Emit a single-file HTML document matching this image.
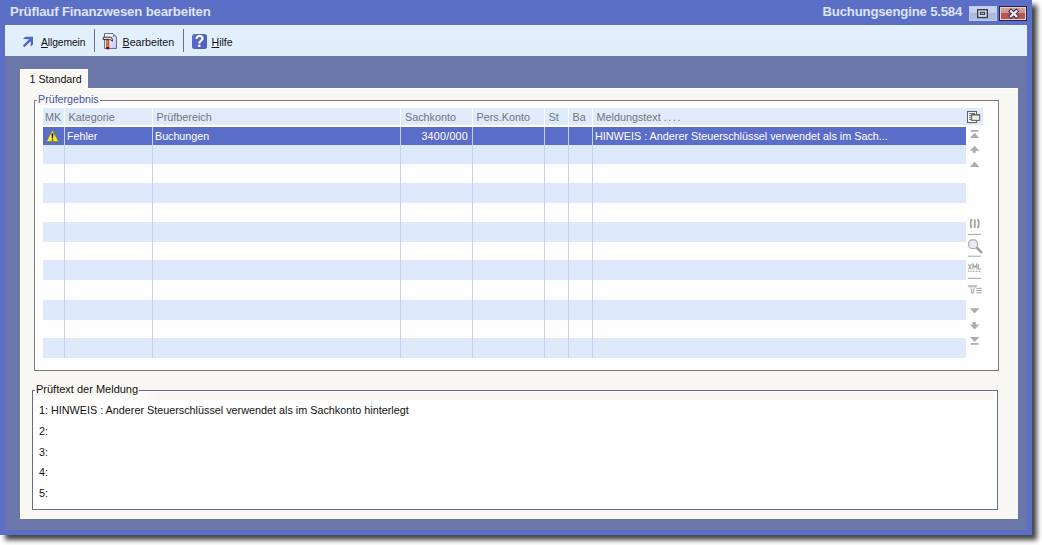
<!DOCTYPE html>
<html><head><meta charset="utf-8">
<style>
*{margin:0;padding:0;box-sizing:border-box}
html,body{width:1042px;height:545px;overflow:hidden;background:#fff;position:relative;font-family:"Liberation Sans",sans-serif}
.a{position:absolute}
.t{position:absolute;white-space:nowrap;line-height:1}
#shr{left:1032px;top:8px;width:9px;height:534px;background:linear-gradient(to right,#404040,#5a5a5a 30%,#a0a0a0 70%,#fff)}
#shb{left:6px;top:535px;width:1035px;height:8px;background:linear-gradient(to bottom,#404040,#5a5a5a 30%,#a0a0a0 70%,#fff)}
#win{left:0;top:0;width:1032px;height:535px;background:#5c6fc7;box-shadow:5px 5px 5px rgba(35,35,35,0.85)}
#tool{left:5px;top:25px;width:1022px;height:31px;background:linear-gradient(#eaf5ff 0,#e3f0fd 2px,#e0eefc 100%)}
#cont{left:5px;top:56px;width:1022px;height:474px;background:#6b77a8}
#tab{left:20px;top:68.5px;width:67.5px;height:20.5px;background:#faf8f4;border-top:1px solid #fff;border-left:1px solid #fff;border-right:1px solid #fdfcfa}
#panel{left:20px;top:88px;width:998px;height:431px;background:#f9f7f3;border-top:1px solid #fff;border-left:1px solid #fff}
.gb{position:absolute;border:1px solid #7c7c7c;background:#fefefe}
.leg{position:absolute;background:#f9f7f3;padding:0 1px;line-height:1;white-space:nowrap}
.hdr{position:absolute;top:108px;height:17px;background:#dfeafa}
.row{position:absolute;left:43px;width:923px;height:19.4px}
.vs{position:absolute;width:1px;background:#c6d0f0}
.ht{font-size:10.8px;color:#75757c}
.ic{position:absolute}
</style></head><body>
<div class="a" id="win"></div>
<div class="t" style="left:10px;top:4.5px;font-size:13.2px;letter-spacing:-0.17px;font-weight:bold;color:#dde3f6">Prüflauf Finanzwesen bearbeiten</div>
<div class="t" style="left:822.5px;top:4.5px;font-size:13.2px;letter-spacing:-0.2px;font-weight:bold;color:#dde3f6">Buchungsengine 5.584</div>
<!-- restore btn -->
<div class="a" style="left:969px;top:6px;width:28px;height:15px;border:1px solid #bccaf0;background:linear-gradient(#c8d3f1 0,#c2cdec 48%,#a9b8d8 48%,#b0bfdf 100%)"></div>
<svg class="a" style="left:976px;top:8px" width="13" height="11" viewBox="0 0 13 11"><rect x="1.7" y="1.7" width="9.6" height="7.8" fill="#e6eaf4" stroke="#363c52" stroke-width="1.4"/><rect x="4.4" y="4.3" width="4.2" height="2.2" fill="#c8cee0" stroke="#363c52" stroke-width="1.2"/></svg>
<!-- close btn -->
<div class="a" style="left:999px;top:6px;width:28px;height:15px;background:#1f2550"></div>
<div class="a" style="left:1000px;top:7px;width:26px;height:13px;border:1px solid #eecdcb;background:linear-gradient(#d3a09a 0,#cd948c 45%,#b4574a 45%,#b65c50 100%)"></div>
<svg class="a" style="left:1007px;top:8px" width="13" height="11" viewBox="0 0 13 11"><path d="M4 3.3L9.3 8.2M9.3 3.3L4 8.2" stroke="#3a3045" stroke-width="4.2" stroke-linecap="square"/><path d="M4 3.3L9.3 8.2M9.3 3.3L4 8.2" stroke="#eee8f0" stroke-width="2.3" stroke-linecap="square"/></svg>

<div class="a" id="tool"></div>
<div class="a" id="cont"></div>

<!-- toolbar -->
<svg class="a" style="left:20px;top:34px" width="16" height="16" viewBox="0 0 16 16"><path d="M3 5 L5.3 2.8 L13 2.8 L13 10.5 L10.7 12.8 L10.7 7.2 L4.4 13.3 L2.8 11.7 L9 5.2 Z" fill="#5566c4"/></svg>
<div class="t" style="left:41px;top:37.8px;font-size:10.3px;letter-spacing:-0.1px;color:#111"><u>A</u>llgemein</div>
<div class="a" style="left:94px;top:29px;width:1px;height:23px;background:#6d7080"></div>
<svg class="a" style="left:100px;top:30px" width="20" height="22" viewBox="0 0 20 22">
<defs><linearGradient id="dg" x1="0" y1="0" x2="1" y2="1"><stop offset="0" stop-color="#ffffff"/><stop offset="1" stop-color="#c4c8ee"/></linearGradient>
<linearGradient id="hg" x1="0" y1="0" x2="1" y2="0"><stop offset="0" stop-color="#a02818"/><stop offset="0.4" stop-color="#f08050"/><stop offset="1" stop-color="#b83020"/></linearGradient></defs>
<path d="M4.5 3.5 H13 L16.5 7 V18.5 H4.5 Z" fill="url(#dg)" stroke="#6c7088" stroke-width="1"/>
<path d="M13 3.5 V7 H16.5 Z" fill="#8d96d6"/>
<rect x="6.2" y="9.3" width="3" height="9.5" fill="url(#hg)"/>
<rect x="6.2" y="17" width="3" height="2.3" fill="#6a1010"/>
<path d="M3.2 7.2 H10.2 Q12.4 7.2 12.4 9.6 V11.2 L11.2 10.2 Q10.8 9.6 9.6 9.6 H3.2 Z" fill="#e4e4e4" stroke="#1c1c1c" stroke-width="0.9"/>
</svg>
<div class="t" style="left:122.5px;top:37px;font-size:10.7px;color:#111"><u>B</u>earbeiten</div>
<div class="a" style="left:183px;top:29px;width:1px;height:23px;background:#6d7080"></div>
<div class="a" style="left:192px;top:34px;width:15px;height:15px;background:linear-gradient(135deg,#5a6ecc,#4a5cbc);border-radius:2.5px"></div>
<div class="t" style="left:194.8px;top:33.6px;font-size:15.6px;font-weight:bold;color:#fff">?</div>
<div class="t" style="left:211.5px;top:37px;font-size:10.6px;color:#111"><u>H</u>ilfe</div>

<!-- tab & panel -->
<div class="a" id="panel"></div>
<div class="a" id="tab"></div>
<div class="t" style="left:29.5px;top:74px;font-size:10.7px;color:#111">1 Standard</div>

<!-- groupbox 1 -->
<div class="gb" style="left:34px;top:100px;width:965px;height:271px"></div>
<div class="leg" style="left:37px;top:94px;font-size:10.7px;color:#4454a8">Prüfergebnis</div>

<!-- header -->
<div class="hdr" style="left:43px;width:21px"></div>
<div class="hdr" style="left:65px;width:87px"></div>
<div class="hdr" style="left:153px;width:247px"></div>
<div class="hdr" style="left:401px;width:71px"></div>
<div class="hdr" style="left:473px;width:71px"></div>
<div class="hdr" style="left:545px;width:23px"></div>
<div class="hdr" style="left:569px;width:23px"></div>
<div class="hdr" style="left:593px;width:390px"></div>
<div class="t ht" style="left:45px;top:111.8px">MK</div>
<div class="t ht" style="left:68.5px;top:111.8px">Kategorie</div>
<div class="t ht" style="left:156.5px;top:111.8px">Prüfbereich</div>
<div class="t ht" style="left:405px;top:111.8px">Sachkonto</div>
<div class="t ht" style="left:476.5px;top:111.8px">Pers.Konto</div>
<div class="t ht" style="left:548.5px;top:111.8px">St</div>
<div class="t ht" style="left:572.5px;top:111.8px">Ba</div>
<div class="t ht" style="left:596.5px;top:111.8px">Meldungstext <span style="letter-spacing:1.6px">....</span></div>

<!-- rows -->
<div class="row" style="top:127px;height:17.6px;background:#5a6ec9"></div>
<div class="row" style="top:144.6px;height:19.9px;background:#deeafb"></div>
<div class="row" style="top:183.1px;height:20.1px;background:#deeafb"></div>
<div class="row" style="top:222.0px;height:19.8px;background:#deeafb"></div>
<div class="row" style="top:259.9px;height:19.8px;background:#deeafb"></div>
<div class="row" style="top:299.9px;height:19.8px;background:#deeafb"></div>
<div class="row" style="top:337.7px;height:20.2px;background:#deeafb"></div>
<div class="vs" style="left:64px;top:127px;height:231px"></div>
<div class="vs" style="left:152px;top:127px;height:231px"></div>
<div class="vs" style="left:400px;top:127px;height:231px"></div>
<div class="vs" style="left:472px;top:127px;height:231px"></div>
<div class="vs" style="left:544px;top:127px;height:231px"></div>
<div class="vs" style="left:568px;top:127px;height:231px"></div>
<div class="vs" style="left:592px;top:127px;height:231px"></div>

<svg class="a" style="left:45px;top:129px" width="15" height="15" viewBox="0 0 15 15"><defs><linearGradient id="wg" x1="0" y1="0" x2="1" y2="1"><stop offset="0" stop-color="#fbf6b8"/><stop offset="0.5" stop-color="#f4ec3c"/><stop offset="1" stop-color="#f2ea10"/></linearGradient></defs><path d="M7.5 1.3 L13.6 12.6 H1.4 Z" fill="url(#wg)" stroke="#8a8030" stroke-width="0.8" stroke-linejoin="round"/><path d="M6.5 4.2 H8.5 L8 9.6 H7 Z" fill="#1a1a1a"/><rect x="6.8" y="10.3" width="1.4" height="1.4" fill="#1a1a1a"/></svg>
<div class="t" style="left:67px;top:131px;font-size:10.7px;color:#fff">Fehler</div>
<div class="t" style="left:155px;top:131px;font-size:10.7px;color:#fff">Buchungen</div>
<div class="t" style="left:418px;top:131px;font-size:10.7px;letter-spacing:0.25px;color:#fff;width:50px;text-align:right">3400/000</div>
<div class="t" style="left:595px;top:131px;font-size:10.8px;color:#fff">HINWEIS : Anderer Steuerschlüssel verwendet als im Sach...</div>

<!-- grid side icons -->
<svg class="a" style="left:0;top:0" width="1042" height="545" viewBox="0 0 1042 545">
<g>
<rect x="967.5" y="111.5" width="9" height="11" fill="#fff" stroke="#646464" stroke-width="1.1"/>
<path d="M969 113.6H975M969 115.6H971.6M969 117.6H971.6M969 119.6H971.6" stroke="#555" stroke-width="0.9"/>
<rect x="971.6" y="114.6" width="8" height="5.8" fill="#eeebe2" stroke="#686868" stroke-width="1.1"/>
<rect x="971.6" y="114.2" width="8" height="1.3" fill="#686868"/>
</g>
<g fill="#adadad">
<rect x="970.8" y="130" width="7.5" height="1.8"/>
<path d="M974.6 132.8L979.4 138H969.9Z"/>
<path d="M974.6 145.8L979.4 150.7H975.8V152.8H972.6V150.7H969.9Z"/>
<path d="M974.6 161.6L979.4 166.9H969.9Z"/>
<path d="M974.6 313.5L979.4 308.3H969.9Z"/>
<path d="M974.6 329.5L979.4 324.4H975.8V322H972.6V324.4H969.9Z"/>
<path d="M974.6 342L979.4 336.9H969.9Z"/>
<rect x="970.8" y="343" width="7.5" height="1.8"/>
</g>
<g fill="none" stroke="#a4a4a4">
<path d="M968 234.4H981M968 256.2H981M968 278.3H981" stroke-width="1"/>
</g>
<g fill="#a0a0a0">
<path d="M972.3 219.6 Q970.8 219.6 970.8 221.2 V222.6 Q970.8 223.5 970.2 223.6 Q970.8 223.7 970.8 224.6 V226 Q970.8 227.5 972.3 227.5" fill="none" stroke="#a2a2a2" stroke-width="1.9"/>
<path d="M977.1 219.6 Q978.6 219.6 978.6 221.2 V222.6 Q978.6 223.5 979.2 223.6 Q978.6 223.7 978.6 224.6 V226 Q978.6 227.5 977.1 227.5" fill="none" stroke="#a2a2a2" stroke-width="1.9"/>
<rect x="973.8" y="219.4" width="1.9" height="8.4" fill="#a2a2a2"/>
</g>
<path d="M976.2 247 L981.2 252.2" stroke="#a0a0a0" stroke-width="2.6" stroke-linecap="round"/>
<rect x="968.6" y="239.9" width="8.8" height="8.6" rx="3.6" fill="#ece8f8" stroke="#ababab" stroke-width="1.1"/>
<path d="M968.4 264.2L971.4 269.4M971.4 264.2L968.4 269.4M972.9 269.6V264.2L974.9 267.6L976.9 264.2V269.6M978.4 264.2V269H981.2" fill="none" stroke="#a0a0a0" stroke-width="1.05"/>
<path d="M968 271.3H981" stroke="#9a9a9a" stroke-width="1" stroke-dasharray="1 0.6"/>
<path d="M967.3 285.2H977.7L974.2 289.2V293.6H971V289.2Z" fill="#b0b0b0"/>
<path d="M969 286.8H976L973.1 289.6V292.8H972.1V289.6Z" fill="#fff" opacity="0.7"/>
<path d="M976.2 288.3H981.8M976.2 290.5H981.8M976.2 292.8H981.8" stroke="#a4a4a4" stroke-width="1"/>
</svg>
<!-- groupbox 2 -->
<div class="gb" style="left:32px;top:390px;width:966px;height:120px;border-color:#686b88"></div>
<div class="a" style="left:120px;top:391.5px;width:874px;height:8.5px;background:linear-gradient(to right,rgba(248,246,241,0),#f8f6f1 40px)"></div>
<div class="leg" style="left:35px;top:383.5px;font-size:11px;color:#111">Prüftext der Meldung</div>
<div class="t" style="left:39px;top:405px;font-size:10.8px;color:#111">1: HINWEIS : Anderer Steuerschlüssel verwendet als im Sachkonto hinterlegt</div>
<div class="t" style="left:39px;top:425.8px;font-size:10.7px;color:#111">2:</div>
<div class="t" style="left:39px;top:446.6px;font-size:10.7px;color:#111">3:</div>
<div class="t" style="left:39px;top:467.4px;font-size:10.7px;color:#111">4:</div>
<div class="t" style="left:39px;top:488.2px;font-size:10.7px;color:#111">5:</div>
</body></html>
